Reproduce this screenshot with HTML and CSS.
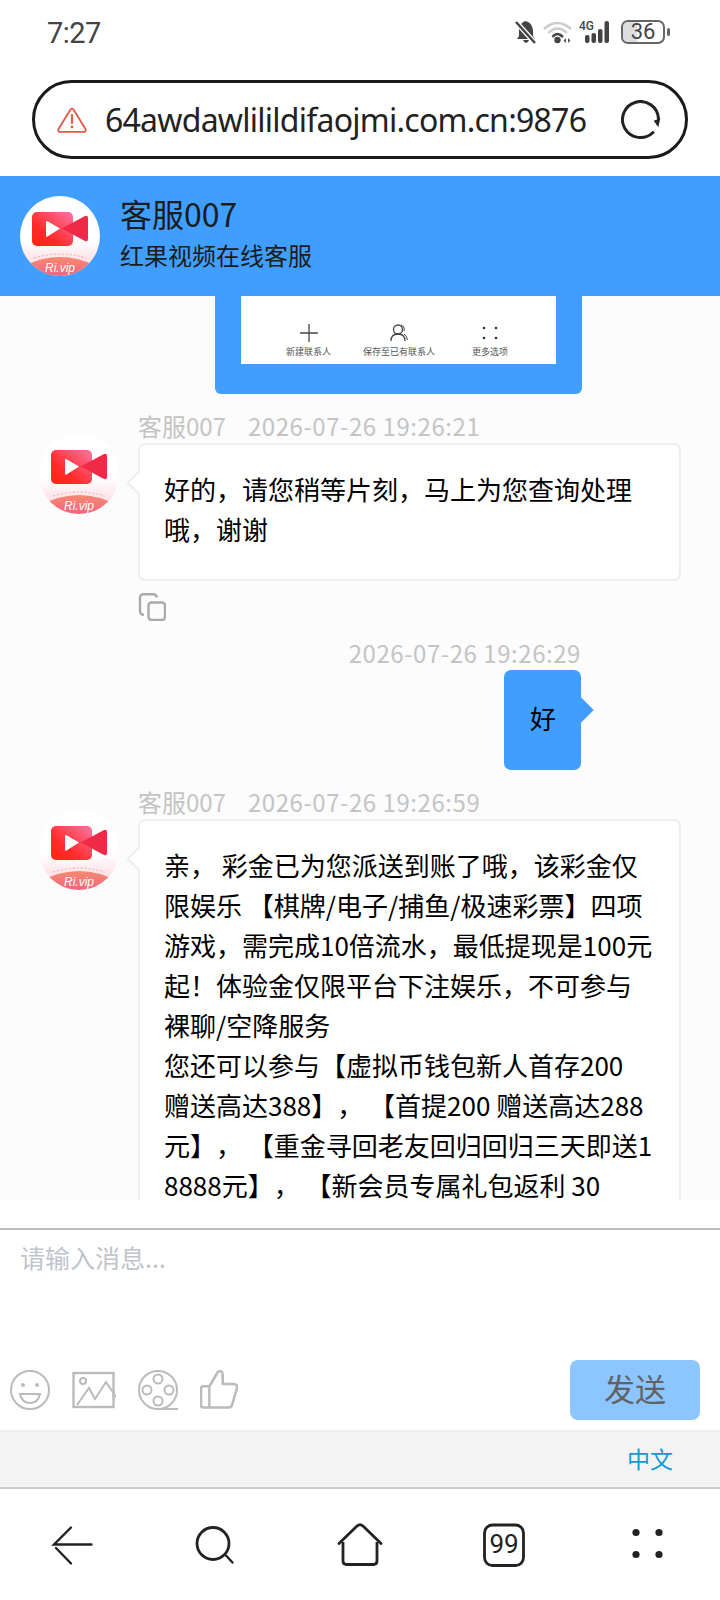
FILE: index.html
```html
<!DOCTYPE html>
<html lang="zh-CN">
<head>
    <meta charset="utf-8">
    <title>客服007</title>
    <link rel="stylesheet" href="styles.css">
</head>
<body>

<svg class="defs" width="0" height="0">
    <defs>
        <linearGradient id="logoBg" x1="0" y1="0" x2="0" y2="1">
            <stop offset="0.55" stop-color="#ffffff"/>
            <stop offset="0.8" stop-color="#ffe3e8"/>
        </linearGradient>
        <linearGradient id="logoRed" x1="1" y1="0" x2="0" y2="1">
            <stop offset="0.1" stop-color="#ff6a92"/>
            <stop offset="0.65" stop-color="#ff2a2a"/>
            <stop offset="1" stop-color="#ff2410"/>
        </linearGradient>
        <linearGradient id="logoCap" x1="0" y1="0" x2="0" y2="1">
            <stop offset="0" stop-color="#f58a72"/>
            <stop offset="1" stop-color="#f4647c"/>
        </linearGradient>
        <clipPath id="logoClip"><circle cx="40" cy="40" r="40"/></clipPath>
        <symbol id="logo" viewBox="0 0 80 80">
            <g clip-path="url(#logoClip)">
                <rect width="80" height="80" fill="url(#logoBg)"/>
                <rect x="12" y="16" width="41" height="34" rx="5" fill="url(#logoRed)"/>
                <path d="M41.7 32.500 L65 20 Q68 19 68 22 V43 Q68 46 65 45 Z" fill="#ee2a48"/>
                <path d="M26 26 Q26 24.500 27.500 25.300 L40 32.500 L27.500 40.500 Q26 41.300 26 40 Z" fill="#fff"/>
                <path d="M0 72 Q40 50 80 72 V80 H0 Z" fill="url(#logoCap)"/>
                <path d="M14 62 Q40 54 66 62" fill="none" stroke="#f7a79c" stroke-width="1" stroke-dasharray="2 2"/>
                <text x="40" y="76" class="logo-text">Ri.vip</text>
            </g>
        </symbol>
    </defs>
</svg>

<div class="page">
    <div class="status">
        <span class="clock">7:27</span>
        <div class="status-icons">
            <svg width="22" height="24" viewBox="0 0 22 24">
                <path d="M10 1 Q17 2 18 10 V16 L20 19 H2 L4 16 V9 Q4 4 10 1 Z" fill="#444"/>
                <path d="M8 20 H14 Q13 23 11 23 Q9 23 8 20 Z" fill="#444"/>
                <path d="M1 2 L20 23" stroke="#fff" stroke-width="5"/>
                <path d="M1 2 L20 23" stroke="#444" stroke-width="2.500"/>
            </svg>
            <svg width="30" height="24" viewBox="0 0 30 24">
                <path d="M1 9 Q14 -3 28 9" fill="none" stroke="#ccc" stroke-width="2.500"/>
                <path d="M5.500 13 Q14 4 24 13" fill="none" stroke="#ccc" stroke-width="2.500"/>
                <path d="M9.500 17 Q14 11 20 17" fill="none" stroke="#444" stroke-width="2.500"/>
                <circle cx="14.500" cy="20" r="3.200" fill="#444"/>
                <path d="M23 18 V23 L20.500 20.500 Z M25 18 V23 L27.500 20.500 Z" fill="#555"/>
            </svg>
            <div class="signal">
                <span class="net">4G</span>
                <svg width="29" height="24" viewBox="0 0 29 24">
                    <rect x="1" y="15" width="4.500" height="8" rx="2" fill="#444"/>
                    <rect x="7.500" y="13" width="4.500" height="10" rx="2" fill="#444"/>
                    <rect x="14" y="9" width="4.500" height="14" rx="2" fill="#444"/>
                    <rect x="20.500" y="1" width="4.500" height="22" rx="2" fill="#444"/>
                </svg>
            </div>
            <div class="battery"><span class="battery-fill"></span><span class="battery-num">36</span></div>
            <span class="battery-nub"></span>
        </div>
    </div>

    <div class="url-wrap">
        <div class="url-bar">
            <svg class="warn" width="30" height="26" viewBox="0 0 30 26">
                <path d="M13.500 2.500 Q15 0.800 16.500 2.500 L28.500 22 Q29.500 24.800 27 24.800 H3 Q0.500 24.800 1.500 22 Z" fill="none" stroke="#e0594a" stroke-width="1.800"/>
                <path d="M15 8 V16" stroke="#e0594a" stroke-width="2.200" stroke-linecap="round"/>
                <circle cx="15" cy="20" r="1.400" fill="#e0594a"/>
            </svg>
            <span class="url-text">64awdawlilildifaojmi.com.cn:9876</span>
            <svg class="reload" width="40" height="40" viewBox="0 0 40 40">
                <path d="M32 32.500 A18 18 0 1 1 37.500 19" fill="none" stroke="#222" stroke-width="3" stroke-linecap="round"/>
                <path d="M32.700 20.700 L39.300 18.300 L37.300 27.300 Z" fill="#222"/>
            </svg>
        </div>
    </div>

    <div class="head">
        <svg class="avatar"><use href="#logo"/></svg>
        <div class="head-text">
            <div class="head-title">客服007</div>
            <div class="head-sub">红果视频在线客服</div>
        </div>
    </div>

    <div class="chat">
        <div class="shot">
            <div class="shot-inner">
                <div class="shot-item">
                    <svg width="18" height="18" viewBox="0 0 18 18">
                        <path d="M9 0 V18 M0 9 H18" stroke="#444" stroke-width="1.300"/>
                    </svg>
                    <span>新建联系人</span>
                </div>
                <div class="shot-item">
                    <svg width="18" height="18" viewBox="0 0 18 18">
                        <circle cx="8" cy="5.500" r="4.500" fill="none" stroke="#444" stroke-width="1.300"/>
                        <path d="M1 17 Q1 10 8 10 Q15 10 15 17" fill="none" stroke="#444" stroke-width="1.300"/>
                        <path d="M11 1 Q15 2 14 7 M14 10 Q17 12 17.500 16" fill="none" stroke="#444" stroke-width="1"/>
                    </svg>
                    <span>保存至已有联系人</span>
                </div>
                <div class="shot-item">
                    <svg width="18" height="18" viewBox="0 0 18 18">
                        <circle cx="3" cy="4" r="1.300" fill="#333"/>
                        <circle cx="15" cy="4" r="1.300" fill="#333"/>
                        <circle cx="3" cy="14" r="1.300" fill="#333"/>
                        <circle cx="15" cy="14" r="1.300" fill="#333"/>
                    </svg>
                    <span>更多选项</span>
                </div>
            </div>
        </div>

        <div class="msg">
            <svg class="msg-avatar"><use href="#logo"/></svg>
            <div class="msg-body">
                <div class="meta"><span class="meta-name">客服007</span><span class="meta-time">2026-07-26 19:26:21</span></div>
                <div class="bubble">好的，请您稍等片刻，马上为您查询处理<br>哦，谢谢</div>
                <svg class="copy" width="28" height="28" viewBox="0 0 28 28">
                    <rect x="10.500" y="9.500" width="16.500" height="17.500" rx="3" fill="none" stroke="#aaa" stroke-width="2.400"/>
                    <path d="M6 22 Q2 21.500 2 18 V5 Q2 1.200 6 1.200 H15 Q18 1.200 19 4.500" fill="none" stroke="#aaa" stroke-width="2.400"/>
                </svg>
            </div>
        </div>

        <div class="msg msg-mine">
            <div class="meta"><span class="meta-time">2026-07-26 19:26:29</span></div>
            <div class="bubble-mine">好</div>
        </div>

        <div class="msg">
            <svg class="msg-avatar"><use href="#logo"/></svg>
            <div class="msg-body">
                <div class="meta"><span class="meta-name">客服007</span><span class="meta-time">2026-07-26 19:26:59</span></div>
                <div class="bubble">亲， 彩金已为您派送到账了哦，该彩金仅<br>限娱乐 【棋牌/电子/捕鱼/极速彩票】四项<br>游戏，需完成10倍流水，最低提现是100元<br>起！体验金仅限平台下注娱乐，不可参与<br>裸聊/空降服务<br>您还可以参与【虚拟币钱包新人首存200<br>赠送高达388】， 【首提200 赠送高达288<br>元】， 【重金寻回老友回归回归三天即送1<br>8888元】， 【新会员专属礼包返利 30</div>
            </div>
        </div>
    </div>

    <div class="strip"></div>

    <div class="composer">
        <div class="placeholder">请输入消息...</div>
        <div class="tools">
            <svg class="tool" width="40" height="40" viewBox="0 0 40 40">
                <circle cx="20" cy="20" r="19" fill="none" stroke="#bbb" stroke-width="2"/>
                <circle cx="13" cy="15" r="2" fill="#bbb"/>
                <circle cx="27" cy="15" r="2" fill="#bbb"/>
                <path d="M10 24 H30 Q28 33 20 33 Q12 33 10 24 Z" fill="none" stroke="#bbb" stroke-width="2"/>
            </svg>
            <svg class="tool" width="44" height="40" viewBox="0 0 44 40">
                <rect x="1.500" y="3" width="40" height="34" fill="none" stroke="#bbb" stroke-width="2.400"/>
                <circle cx="11" cy="11" r="3" fill="none" stroke="#bbb" stroke-width="2"/>
                <path d="M5 35 L17 18 L23 29 L34 12 L44 27" fill="none" stroke="#bbb" stroke-width="2"/>
            </svg>
            <svg class="tool" width="40" height="40" viewBox="0 0 40 40">
                <circle cx="20" cy="20" r="19" fill="none" stroke="#bbb" stroke-width="2"/>
                <circle cx="20" cy="9" r="4.500" fill="none" stroke="#bbb" stroke-width="2"/>
                <circle cx="20" cy="31" r="4.500" fill="none" stroke="#bbb" stroke-width="2"/>
                <circle cx="9" cy="20" r="4.500" fill="none" stroke="#bbb" stroke-width="2"/>
                <circle cx="31" cy="20" r="4.500" fill="none" stroke="#bbb" stroke-width="2"/>
                <path d="M20 39 H40" stroke="#bbb" stroke-width="2"/>
            </svg>
            <svg class="tool" width="38" height="40" viewBox="0 0 38 40">
                <path d="M9.300 16.300 L16.700 4 Q18 0.500 21 1 Q22.700 2 22.700 5 V14 H33.300 Q37.500 14 37 18 L32 35 Q31 37.500 29 37.500 H3.300 Q1 37.500 1 35 V19 Q1 16.300 3.300 16.300 Z" fill="none" stroke="#bbb" stroke-width="2.600" stroke-linejoin="round"/>
                <path d="M9.300 16.300 V37" fill="none" stroke="#bbb" stroke-width="2.400"/>
            </svg>
            <button class="send">发送</button>
        </div>
    </div>

    <div class="lang"><span>中文</span></div>

    <div class="nav">
        <svg width="48" height="48" viewBox="0 0 48 48">
            <path d="M23 6.500 L6 23.500 H43.500 M8 27 L23 42.500" fill="none" stroke="#222" stroke-width="2.400" stroke-linecap="round"/>
        </svg>
        <svg width="48" height="48" viewBox="0 0 48 48">
            <circle cx="21" cy="22.500" r="16" fill="none" stroke="#222" stroke-width="2.800"/>
            <path d="M34 34.500 L40.500 41.500" stroke="#222" stroke-width="2.400" stroke-linecap="round"/>
        </svg>
        <svg width="48" height="48" viewBox="0 0 48 48">
            <path d="M3 22.500 L21 5 Q24 2.500 27 5 L45 22.500" fill="none" stroke="#222" stroke-width="2.800" stroke-linecap="round"/>
            <path d="M7 21 V40 Q7 43.500 10.500 43.500 H37.500 Q41 43.500 41 40 V21" fill="none" stroke="#222" stroke-width="2.800"/>
        </svg>
        <svg width="48" height="48" viewBox="0 0 48 48">
            <rect x="4.500" y="4" width="39" height="40.500" rx="8" fill="none" stroke="#222" stroke-width="2.800"/>
            <text x="24" y="32" class="tab-count">99</text>
        </svg>
        <svg width="48" height="48" viewBox="0 0 48 48">
            <circle cx="12" cy="11.500" r="3.600" fill="#222"/>
            <circle cx="35" cy="11.500" r="3.600" fill="#222"/>
            <circle cx="12" cy="33.500" r="3.600" fill="#222"/>
            <circle cx="35" cy="33.500" r="3.600" fill="#222"/>
        </svg>
    </div>
</div>

</body>
</html>
```

FILE: styles.css
```css
body {
    margin: 0;
    padding: 0;
    font-family: "Noto Sans CJK SC", "Noto Sans", sans-serif;
    background-color: #fff;
    color: #000;
    text-spacing-trim: space-all;
}
svg {
    display: block;
}
.defs {
    position: absolute;
}
.logo-text {
    font-family: "Liberation Sans", sans-serif;
    font-size: 12px;
    font-style: italic;
    fill: #fff;
    text-anchor: middle;
}
.page {
    width: 720px;
    height: 1600px;
    display: flex;
    flex-direction: column;
    overflow: hidden;
}

/* phone status bar */
.status {
    height: 80px;
    flex: none;
    display: flex;
    justify-content: space-between;
    padding: 20px 50px 0 47px;
    box-sizing: border-box;
}
.clock {
    font-family: Roboto, sans-serif;
    font-size: 29px;
    line-height: 26px;
    height: 26px;
    letter-spacing: -0.5px;
    color: #444;
}
.status-icons {
    display: flex;
    align-items: flex-start;
    height: 24px;
}
.status-icons > svg:first-child {
    margin-right: 6px;
}
.signal {
    position: relative;
    margin-left: 7px;
    width: 33px;
    padding-left: 4px;
    box-sizing: border-box;
}
.net {
    position: absolute;
    left: -1px;
    top: 0;
    font-family: Roboto, sans-serif;
    font-size: 12px;
    line-height: 12px;
    font-weight: 500;
    color: #444;
}
.battery {
    position: relative;
    margin-left: 8px;
    width: 44px;
    height: 24px;
    border: 2px solid #666;
    border-radius: 7px;
    box-sizing: border-box;
    overflow: hidden;
    text-align: center;
}
.battery-fill {
    position: absolute;
    left: 0;
    top: 0;
    bottom: 0;
    width: 36%;
    background-color: #ddd;
}
.battery-num {
    position: relative;
    display: block;
    font-family: Roboto, sans-serif;
    font-size: 22px;
    line-height: 20px;
    color: #444;
}
.battery-nub {
    width: 3px;
    height: 8px;
    margin: 8px 0 0 2px;
    background-color: #666;
    border-radius: 2px;
}

/* address bar */
.url-wrap {
    height: 96px;
    flex: none;
    padding: 0 32px;
    box-sizing: border-box;
}
.url-bar {
    height: 79px;
    border: 3px solid #1a1a1a;
    border-radius: 40px;
    box-sizing: border-box;
    display: flex;
    align-items: center;
    padding: 0 24px 0 22px;
}
.url-text {
    flex: 1;
    min-width: 0;
    margin-left: 18px;
    font-family: "Noto Sans", sans-serif;
    font-size: 32px;
    letter-spacing: -0.75px;
    color: #222;
    white-space: nowrap;
}

/* blue chat header */
.head {
    height: 120px;
    flex: none;
    background-color: #409eff;
    display: flex;
    align-items: center;
    padding-left: 20px;
}
.avatar {
    width: 80px;
    height: 80px;
    margin-right: 20px;
}
.head-text {
    margin-bottom: 6px;
}
.head-title {
    font-size: 32px;
    line-height: 38px;
    color: #1c1c1c;
}
.head-sub {
    font-size: 24px;
    line-height: 36px;
    margin-top: 5px;
    color: #1c1c1c;
}

/* messages */
.chat {
    height: 904px;
    flex: none;
    overflow: hidden;
    background-color: #fcfcfc;
}
.shot {
    width: 367px;
    margin-left: 215px;
    padding: 0 26px 30px;
    box-sizing: border-box;
    background-color: #409eff;
    border-radius: 0 0 6px 6px;
}
.shot-inner {
    height: 68px;
    background-color: #fff;
    box-sizing: border-box;
    padding: 28px 0 0 45px;
    display: grid;
    grid-template-columns: 77px 109px 35px;
}
.shot-item {
    width: fit-content;
    display: flex;
    flex-direction: column;
    align-items: center;
    gap: 4px;
    font-size: 9px;
    line-height: 12px;
    color: #555;
    white-space: nowrap;
}
.msg {
    display: flex;
    margin-top: 19px;
}
.msg-avatar {
    width: 80px;
    height: 80px;
    margin: 21px 19px 0 39px;
    flex: none;
}
.msg-body {
    width: 543px;
}
.meta {
    height: 30px;
    font-size: 24px;
    line-height: 26px;
    color: #c4c4c4;
    white-space: nowrap;
}
.meta-name {
    margin-right: 22px;
}
.meta-time {
    letter-spacing: 0.55px;
}
.bubble {
    position: relative;
    background-color: #fff;
    border: 2px solid #eee;
    border-radius: 7px;
    padding: 24px 24px 30px;
    font-size: 26px;
    line-height: 40px;
    white-space: nowrap;
}
.bubble::before {
    content: "";
    position: absolute;
    left: -10px;
    top: 29px;
    width: 16px;
    height: 16px;
    background-color: #fff;
    border-left: 2px solid #eee;
    border-bottom: 2px solid #eee;
    transform: rotate(45deg);
}
.copy {
    margin-top: 12px;
    margin-bottom: 19px;
}
.msg-mine {
    flex-direction: column;
    align-items: flex-end;
    margin-top: 0;
    padding-right: 139px;
}
.bubble-mine {
    position: relative;
    background-color: #409eff;
    border-radius: 7px;
    padding: 28px 25px 32px 26px;
    font-size: 26px;
    line-height: 40px;
}
.bubble-mine::after {
    content: "";
    position: absolute;
    right: -9px;
    top: 31px;
    width: 18px;
    height: 18px;
    background-color: #409eff;
    transform: rotate(45deg);
}

/* input box */
.strip {
    height: 28px;
    flex: none;
}
.composer {
    height: 202px;
    flex: none;
    box-sizing: border-box;
    border-top: 2px solid #bbb;
    display: flex;
    flex-direction: column;
    justify-content: space-between;
    padding-bottom: 10px;
}
.placeholder {
    margin: 10px 0 0 20px;
    font-size: 25px;
    line-height: 34px;
    color: #c0c4cc;
}
.tools {
    display: flex;
    align-items: center;
    gap: 22px;
    padding: 0 20px 0 10px;
}
.send {
    margin-left: auto;
    width: 130px;
    height: 60px;
    border: none;
    border-radius: 8px;
    background-color: #8cc5ff;
    color: #606266;
    font-family: inherit;
    font-size: 31px;
    padding: 0 0 6px;
}
.lang {
    height: 59px;
    flex: none;
    box-sizing: border-box;
    background-color: #f3f3f3;
    border-top: 2px solid #eee;
    border-bottom: 2px solid #ccc;
    display: flex;
    align-items: center;
    justify-content: flex-end;
    padding: 0 47px 4px 0;
    font-size: 23px;
    color: #0e9ad6;
}

/* browser toolbar */
.nav {
    flex: 1;
    display: grid;
    grid-template-columns: repeat(5, 144px);
    place-items: center;
}
.tab-count {
    font-family: Roboto, sans-serif;
    font-size: 26px;
    text-anchor: middle;
    fill: #222;
}
```
